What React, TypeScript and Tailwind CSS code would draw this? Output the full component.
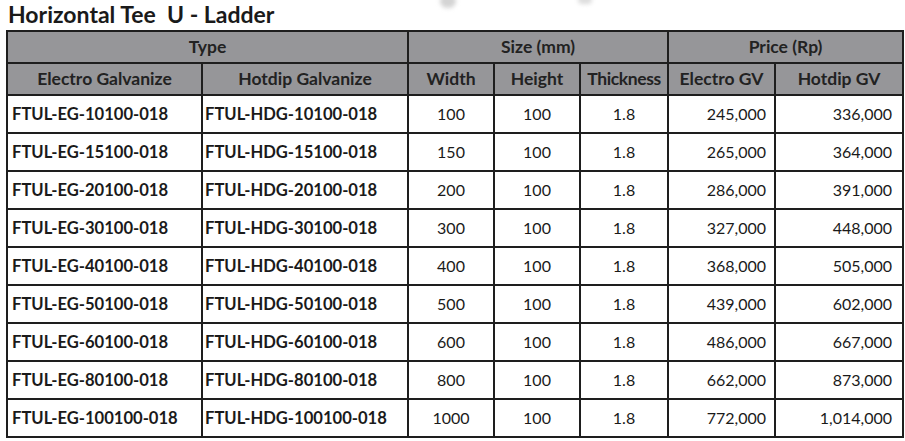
const rows = [
  ["FTUL-EG-10100-018", "FTUL-HDG-10100-018", "100", "100", "1.8", "245,000", "336,000"],
  ["FTUL-EG-15100-018", "FTUL-HDG-15100-018", "150", "100", "1.8", "265,000", "364,000"],
  ["FTUL-EG-20100-018", "FTUL-HDG-20100-018", "200", "100", "1.8", "286,000", "391,000"],
  ["FTUL-EG-30100-018", "FTUL-HDG-30100-018", "300", "100", "1.8", "327,000", "448,000"],
  ["FTUL-EG-40100-018", "FTUL-HDG-40100-018", "400", "100", "1.8", "368,000", "505,000"],
  ["FTUL-EG-50100-018", "FTUL-HDG-50100-018", "500", "100", "1.8", "439,000", "602,000"],
  ["FTUL-EG-60100-018", "FTUL-HDG-60100-018", "600", "100", "1.8", "486,000", "667,000"],
  ["FTUL-EG-80100-018", "FTUL-HDG-80100-018", "800", "100", "1.8", "662,000", "873,000"],
  ["FTUL-EG-100100-018", "FTUL-HDG-100100-018", "1000", "100", "1.8", "772,000", "1,014,000"],
];

const th = " border-2 border-[#1e1e1e] bg-[#969699] text-[#222] font-bold text-center p-0 ";

export default function App() {
  return (
    <div className=" relative w-[905px] h-[441px] bg-white overflow-hidden font-['Lato',sans-serif] ">
      {/* faint watermark bits at the top */}
      <div className=" absolute left-[440px] top-[-6px] w-[16px] h-[14px] rounded-full bg-[#d4d4d4] blur-[2px] " />
      <div className=" absolute left-[578px] top-[-4px] w-[14px] h-[8px] rounded-full bg-[#dcdcdc] blur-[2px] " />

      <h1 className=" h-[30px] pl-[8px] text-[23px] leading-[28px] font-bold text-[#1a1a1a] whitespace-pre ">
        Horizontal Tee  U - Ladder
      </h1>

      <table className=" ml-[6px] w-[896px] table-fixed border-collapse text-[#1a1a1a] ">
        <colgroup>
          <col className=" w-[195px] " />
          <col className=" w-[206px] " />
          <col className=" w-[86px] " />
          <col className=" w-[86px] " />
          <col className=" w-[88px] " />
          <col className=" w-[107px] " />
          <col className=" w-[128px] " />
        </colgroup>
        <thead>
          <tr className=" h-[32px] text-[17.5px] ">
            <th colSpan={2} className={th}>Type</th>
            <th colSpan={3} className={th}>Size (mm)</th>
            <th colSpan={2} className={th}>Price (Rp)</th>
          </tr>
          <tr className=" h-[32px] text-[17.5px] ">
            <th className={th}>Electro Galvanize</th>
            <th className={th}>Hotdip Galvanize</th>
            <th className={th}>Width</th>
            <th className={th}>Height</th>
            <th className={th + " tracking-[-0.4px] "}>Thickness</th>
            <th className={th}>Electro GV</th>
            <th className={th}>Hotdip GV</th>
          </tr>
        </thead>
        <tbody>
          {rows.map((r) => (
            <tr key={r[0]} className=" h-[38px] text-[16px] ">
              <td className=" border-2 border-[#1e1e1e] pl-[4px] text-[16.6px] font-bold whitespace-nowrap ">{r[0]}</td>
              <td className=" border-2 border-[#1e1e1e] pl-[2px] text-[16.6px] font-bold whitespace-nowrap ">{r[1]}</td>
              <td className=" border-2 border-[#1e1e1e] text-center ">{r[2]}</td>
              <td className=" border-2 border-[#1e1e1e] text-center ">{r[3]}</td>
              <td className=" border-2 border-[#1e1e1e] text-center ">{r[4]}</td>
              <td className=" border-2 border-[#1e1e1e] text-right pr-[8px] ">{r[5]}</td>
              <td className=" border-2 border-[#1e1e1e] text-right pr-[10px] ">{r[6]}</td>
            </tr>
          ))}
        </tbody>
      </table>
    </div>
  );
}
